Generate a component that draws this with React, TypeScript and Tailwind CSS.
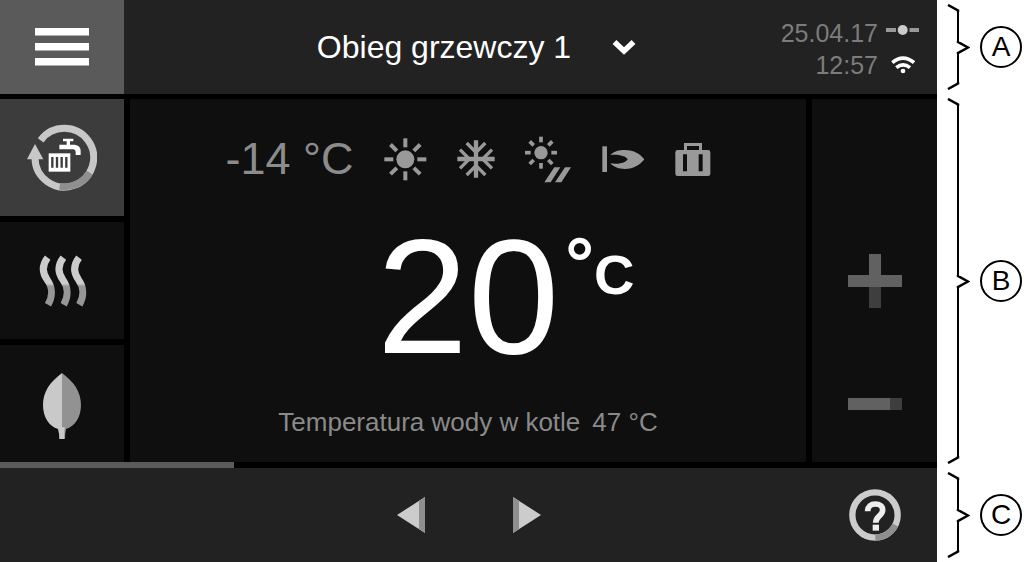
import type { ReactNode } from 'react';

const RAY_ANGLES = [0, 45, 90, 135, 180, 225, 270, 315];

function MenuIcon() {
  return (
    <svg viewBox="0 0 54 38" className="w-[54px]" fill="#fff" aria-hidden="true">
      <rect width="54" height="7.5" />
      <rect y="15" width="54" height="7.5" />
      <rect y="30" width="54" height="7.5" />
    </svg>
  );
}

function ChevronIcon() {
  return (
    <svg viewBox="0 0 24 16" className="pointer-events-none w-6" fill="none" aria-hidden="true">
      <path d="M2.500 3 12 12 21.500 3" stroke="#fff" strokeWidth="5.5" />
    </svg>
  );
}

function ConnectionIcon() {
  return (
    <svg viewBox="0 0 33 18" className="w-[33px]" aria-hidden="true">
      <path d="M0 4h10v4H0zM23.500 4H33v4h-9.500z" fill="#999" />
      <circle cx="16.700" cy="6" r="5" fill="#ccc" />
    </svg>
  );
}

function WifiIcon() {
  return (
    <svg viewBox="392 170 72 54" className="w-6" fill="none" stroke="#fff" strokeWidth="11" aria-hidden="true">
      <path d="M396 190Q428 163 461 190" />
      <path d="M408 205Q428 188 449 205" />
      <circle cx="428" cy="215" r="7" fill="#fff" stroke="none" />
    </svg>
  );
}

// Hot water and heating together: tap and radiator inside a cycle arrow
function HotWaterIcon() {
  return (
    <svg viewBox="82 104 210 201" className="w-[70px]" fill="none" aria-hidden="true">
      <path d="M123 153A88 88 0 1 1 106 206" stroke="#c8c8c8" strokeWidth="21" />
      <path d="M270 250A88 88 0 0 1 180 291" stroke="#8f8f8f" strokeWidth="21" />
      <path d="M106 164 82 210h49z" fill="#c8c8c8" />
      <path
        d="M190 148h31v8h-10v10h14q18 2 18 20v11h-15v-9q0-7-7-8h-42v-14h22v-10h-11z"
        fill="#fff"
      />
      <path d="M147 192h65v55h-65z" fill="#fff" />
      <path d="M158 203v32M172 203v32M186 203v32M200 203v32" stroke="#3c3c3c" strokeWidth="7" />
    </svg>
  );
}

function HeatIcon() {
  return (
    <svg viewBox="108 120 156 156" className="w-[52px]" fill="none" aria-hidden="true">
      <defs>
        <linearGradient id="heat" gradientUnits="userSpaceOnUse" x1="186" y1="120" x2="186" y2="276">
          <stop offset="0.55" stopColor="#ccc" />
          <stop offset="0.6" stopColor="#969696" />
        </linearGradient>
      </defs>
      {[0, 47, 94].map((dx) => (
        <path
          key={dx}
          d="M143 128C126 150 126 173 142 195C158 217 158 245 144 269"
          transform={`translate(${dx} 0)`}
          stroke="url(#heat)"
          strokeWidth="21"
        />
      ))}
    </svg>
  );
}

function LeafIcon() {
  return (
    <svg viewBox="126 84 120 213" className="w-10" aria-hidden="true">
      <path d="M186 99C150 126 129 155 129 195C129 231 147 259 174 267Q178 280 178 297H186Z" fill="#c9c9c9" />
      <path d="M186 99C222 126 243 155 243 195C243 231 225 259 198 267Q195 280 195 297H186Z" fill="#929292" />
      <path d="M186 262h8l-2 35h-6z" fill="#c9c9c9" />
    </svg>
  );
}

function SunIcon() {
  return (
    <svg viewBox="27 39 129 129" className="w-[43px]" aria-hidden="true">
      <circle cx="91" cy="103" r="27" fill="#999" />
      {RAY_ANGLES.map((angle) => (
        <path key={angle} d="M91 40v27" stroke="#999" strokeWidth="12" transform={`rotate(${angle} 91 103)`} />
      ))}
    </svg>
  );
}

function SnowflakeIcon() {
  return (
    <svg viewBox="252 49 114 114" className="w-[38px]" fill="none" stroke="#999" aria-hidden="true">
      <path d="M309 50v112M253 106h112" strokeWidth="13" />
      <path
        d="M281 58l28 28 28-28M281 154l28-28 28 28M261 78l28 28-28 28M357 78l-28 28 28 28"
        strokeWidth="10"
      />
    </svg>
  );
}

function SunShadeIcon() {
  return (
    <svg viewBox="459 34 141 141" className="w-[47px]" aria-hidden="true">
      <circle cx="507" cy="84" r="20" fill="#999" />
      {RAY_ANGLES.map((angle) => (
        <path key={angle} d="M507 36v17" stroke="#999" strokeWidth="11" transform={`rotate(${angle} 507 84)`} />
      ))}
      <path d="M547 128h18l-29 45h-19zM579 128h18l-29 45h-19z" fill="#999" />
    </svg>
  );
}

function FlameIcon() {
  return (
    <svg viewBox="681 63 129 81" className="w-[43px]" fill="#999" aria-hidden="true">
      <path d="M682 64h14v77h-14z" />
      <path d="M706 90C718 78 732 75 749 75C778 75 795 87 808 103C795 119 778 132 749 132C732 132 717 127 706 115C725 119 752 115 758 103C752 91 725 87 706 90Z" />
    </svg>
  );
}

function SuitcaseIcon() {
  return (
    <svg viewBox="909 51 108 105" className="w-9" fill="#999" aria-hidden="true">
      <path d="M936 76V54h54v22h-9V63h-36v13z" />
      <rect x="910" y="75" width="105" height="78" rx="7" />
      <path d="M933 88h12v51h-12zM980 88h12v51h-12z" fill="#0f0f0f" />
    </svg>
  );
}

function PlusIcon() {
  return (
    <svg viewBox="0 0 54 54" className="w-[54px]" aria-hidden="true">
      <path d="M21 0h12v21h21v12H0V21h21z" fill="#616161" />
      <path d="M21 33h12v21H21z" fill="#3e3e3e" />
    </svg>
  );
}

function MinusIcon() {
  return (
    <svg viewBox="0 0 54 12" className="w-[54px]" aria-hidden="true">
      <path d="M0 0h42v12H0z" fill="#616161" />
      <path d="M42 0h12v12H42z" fill="#3e3e3e" />
    </svg>
  );
}

function ArrowIcon({ flip = false }: { flip?: boolean }) {
  return (
    <svg viewBox="0 0 28 36" className={flip ? 'w-7 rotate-180' : 'w-7'} aria-hidden="true">
      <path d="M0 0 28 18 0 36z" fill="#ccc" />
      <path d="M0 0 6 3.9V32.1L0 36z" fill="#8f8f8f" />
    </svg>
  );
}

function HelpIcon() {
  return (
    <svg viewBox="146 116 156 156" className="w-[52px]" fill="none" aria-hidden="true">
      <circle cx="224" cy="194" r="68" stroke="#ccc" strokeWidth="19" />
      <path d="M285 224A68 68 0 0 1 225 262" stroke="#8f8f8f" strokeWidth="19" />
      <path
        d="M202 183C202 168 212 161 225 161C239 161 247 168 247 179C247 197 226 196 226 217"
        stroke="#eee"
        strokeWidth="17"
      />
      <path d="M217 223h19v18h-19z" fill="#eee" />
    </svg>
  );
}

// Curly bracket whose straight parts grow with the row, with its letter beside it
function Annotation({ label }: { label: string }) {
  return (
    <div className="flex items-stretch gap-2.5 py-1 pl-2.5 text-black">
      <div className="flex w-[23px] flex-col" aria-hidden="true">
        <svg viewBox="0 0 23 8" className="w-full" fill="none" stroke="currentColor" strokeWidth="2.5">
          <path d="M1 1 11 6.500V8" />
        </svg>
        <div className="ml-[10px] flex-1 border-l-2" />
        <svg viewBox="0 0 23 13" className="w-full" fill="none" stroke="currentColor" strokeWidth="2.5">
          <path d="M11 0V1L21 6.500 11 12V13" />
        </svg>
        <div className="ml-[10px] flex-1 border-l-2" />
        <svg viewBox="0 0 23 8" className="w-full" fill="none" stroke="currentColor" strokeWidth="2.5">
          <path d="M1 7 11 1.500V0" />
        </svg>
      </div>
      <span className="flex size-[42px] items-center justify-center self-center rounded-full border-2 text-[28px] leading-none">
        {label}
      </span>
    </div>
  );
}

function ModeTile({ label, active = false, children }: { label: string; active?: boolean; children: ReactNode }) {
  return (
    <button
      type="button"
      aria-label={label}
      aria-pressed={active}
      className={`flex items-center justify-center ${active ? 'bg-[#3c3c3c]' : 'bg-[#0f0f0f]'}`}
    >
      {children}
    </button>
  );
}

export default function App() {
  return (
    <div className="grid min-h-screen grid-cols-[1fr_87px] grid-rows-[auto_1fr_auto] bg-white font-['Liberation_Sans',Arial,sans-serif]">
      <header className="flex min-h-[94px] bg-[#222]">
        <button
          type="button"
          aria-label="Menu"
          className="flex w-[124px] items-center justify-center bg-[#5a5a5a]"
        >
          <MenuIcon />
        </button>
        <div className="flex flex-1 items-center justify-center pl-12">
          <label className="flex items-center gap-10">
            <select
              aria-label="Obieg grzewczy"
              className="appearance-none bg-transparent text-[32px] leading-10 text-white"
            >
              <option>Obieg grzewczy 1</option>
            </select>
            <ChevronIcon />
          </label>
        </div>
        <div className="grid grid-cols-[auto_33px] content-center items-center justify-items-end gap-x-2 pt-1 pr-[18px] text-[25px] leading-8 text-[#7c7c7c]">
          <span>25.04.17</span>
          <ConnectionIcon />
          <span>12:57</span>
          <span className="justify-self-center">
            <WifiIcon />
          </span>
        </div>
      </header>
      <Annotation label="A" />

      <div className="flex flex-col bg-black pt-[5px]">
        <div className="grid flex-1 grid-cols-[124px_1fr_125px] gap-1.5">
          <nav className="grid grid-rows-3 gap-1.5">
            <ModeTile label="Ciepła woda" active>
              <HotWaterIcon />
            </ModeTile>
            <ModeTile label="Ogrzewanie">
              <HeatIcon />
            </ModeTile>
            <ModeTile label="Tryb eco">
              <LeafIcon />
            </ModeTile>
          </nav>

          <main className="flex flex-col items-center justify-between bg-[#0f0f0f] py-6">
            <div className="flex items-center gap-[30px] pt-2">
              <span className="text-[45px] leading-14 text-[#8c8c8c]">-14 °C</span>
              <SunIcon />
              <SnowflakeIcon />
              <SunShadeIcon />
              <FlameIcon />
              <SuitcaseIcon />
            </div>
            <div className="relative text-[164px] leading-[140px] text-white">
              20
              <span className="absolute top-1 left-full flex items-start pl-1.5 font-bold">
                <span className="text-[72px] leading-16">°</span>
                <span className="pt-3 text-[56px] leading-16">C</span>
              </span>
            </div>
            <p className="flex gap-3 text-[26px] leading-8 text-[#8a8a8a]">
              <span>Temperatura wody w kotle</span>
              <span>47 °C</span>
            </p>
          </main>

          <div className="grid grid-rows-3 gap-1.5 bg-[#0f0f0f]">
            <button type="button" aria-label="Zwiększ" className="row-start-2 flex items-center justify-center">
              <PlusIcon />
            </button>
            <button type="button" aria-label="Zmniejsz" className="row-start-3 flex items-center justify-center">
              <MinusIcon />
            </button>
          </div>
        </div>
        <div className="h-1.5">
          <div className="h-full w-1/4 bg-[#5a5a5a]" />
        </div>
      </div>
      <Annotation label="B" />

      <footer className="grid min-h-[94px] grid-cols-[124px_1fr_124px] items-center bg-[#222]">
        <div className="col-start-2 flex justify-center gap-22">
          <button type="button" aria-label="Wstecz">
            <ArrowIcon flip />
          </button>
          <button type="button" aria-label="Dalej">
            <ArrowIcon />
          </button>
        </div>
        <button type="button" aria-label="Pomoc" className="flex justify-center">
          <HelpIcon />
        </button>
      </footer>
      <Annotation label="C" />
    </div>
  );
}
